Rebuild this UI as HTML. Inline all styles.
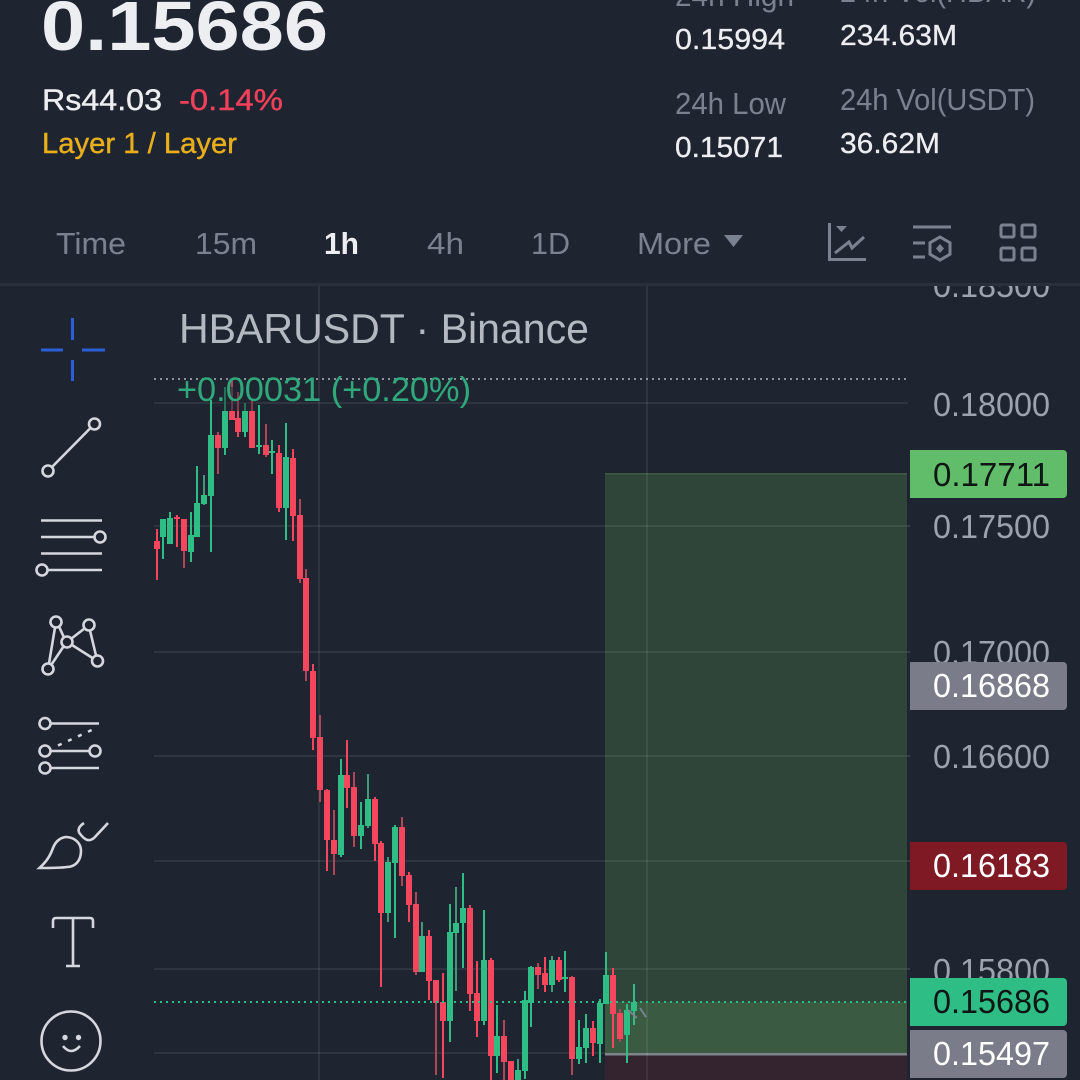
<!DOCTYPE html>
<html><head><meta charset="utf-8"><title>HBARUSDT</title>
<style>
html,body{margin:0;padding:0;width:1080px;height:1080px;overflow:hidden;background:#1f2530}
svg{display:block}
text{font-family:"Liberation Sans",sans-serif}
.a{fill:#9da3ad;font-size:33px}
.l{font-size:33px}
.m{fill:#7b828f;font-size:31px}
.w{fill:#eceef1;font-size:29px;stroke:#eceef1;stroke-width:.3}
.i{fill:none;stroke:#d5d7de;stroke-width:2.6}
.t{fill:none;stroke:#7b828f;stroke-width:3}
</style></head><body>
<svg width="1080" height="1080" viewBox="0 0 1080 1080" xmlns="http://www.w3.org/2000/svg">
<rect width="1080" height="1080" fill="#1f2530"/>

<!-- header -->
<text x="41" y="50" font-size="70" font-weight="700" fill="#eceef2" textLength="287" lengthAdjust="spacingAndGlyphs">0.15686</text>
<text x="42" y="110" font-size="30" fill="#eceef1" stroke="#eceef1" stroke-width=".4" textLength="120" lengthAdjust="spacingAndGlyphs">Rs44.03</text>
<text x="179" y="110" font-size="30" fill="#f0405a" stroke="#f0405a" stroke-width=".4" textLength="104" lengthAdjust="spacingAndGlyphs">-0.14%</text>
<text x="42" y="153" font-size="29" fill="#e8ae1c" stroke="#e8ae1c" stroke-width=".4" textLength="195" lengthAdjust="spacingAndGlyphs">Layer 1 / Layer</text>
<text x="675" y="6" class="m" font-size="30" textLength="119" lengthAdjust="spacingAndGlyphs">24h High</text>
<text x="840" y="2" class="m" textLength="196" lengthAdjust="spacingAndGlyphs">24h Vol(HBAR)</text>
<text x="675" y="49" class="w" textLength="110" lengthAdjust="spacingAndGlyphs">0.15994</text>
<text x="840" y="45" class="w" textLength="117" lengthAdjust="spacingAndGlyphs">234.63M</text>
<text x="675" y="114" class="m" textLength="111" lengthAdjust="spacingAndGlyphs">24h Low</text>
<text x="840" y="110" class="m" textLength="195" lengthAdjust="spacingAndGlyphs">24h Vol(USDT)</text>
<text x="675" y="157" class="w" textLength="108" lengthAdjust="spacingAndGlyphs">0.15071</text>
<text x="840" y="153" class="w" textLength="100" lengthAdjust="spacingAndGlyphs">36.62M</text>

<!-- tabs -->
<text x="56" y="254" class="m" textLength="70" lengthAdjust="spacingAndGlyphs">Time</text>
<text x="195" y="254" class="m" textLength="62" lengthAdjust="spacingAndGlyphs">15m</text>
<text x="324" y="254" font-size="31" font-weight="700" fill="#eceef1" textLength="35" lengthAdjust="spacingAndGlyphs">1h</text>
<text x="427" y="254" class="m" textLength="37" lengthAdjust="spacingAndGlyphs">4h</text>
<text x="531" y="254" class="m" textLength="39" lengthAdjust="spacingAndGlyphs">1D</text>
<text x="637" y="254" class="m" textLength="74" lengthAdjust="spacingAndGlyphs">More</text>
<path d="M724 235H743L733.500 247Z" fill="#7b828f"/>
<path class="t" d="M829.500 223V259.500H866"/>
<path d="M836 226H847L841.500 232Z" fill="#7b828f"/>
<path class="t" d="M835 253L849 242L852 248L864 237"/>
<path class="t" d="M913 227H951M913 243H925M913 257H925"/>
<path class="t" d="M940 237L950 242.700V254.300L940 260L930 254.300V242.700Z"/>
<path d="M940 244L944 248.500L940 253L936 248.500Z" fill="#7b828f"/>
<rect x="1001" y="225" width="13" height="12" rx="1.500" class="t"/>
<rect x="1022" y="225" width="13" height="12" rx="1.500" class="t"/>
<rect x="1001" y="248" width="13" height="12" rx="1.500" class="t"/>
<rect x="1022" y="248" width="13" height="12" rx="1.500" class="t"/>
<rect x="0" y="283" width="1080" height="3" fill="#2a303a"/>

<!-- zones -->
<rect x="605" y="473" width="302" height="529" fill="#2f4539"/>
<rect x="605" y="473" width="302" height="1.500" fill="#3d5a47"/>
<rect x="605" y="1002" width="302" height="51" fill="#3a5a41"/>
<rect x="605" y="1055" width="302" height="25" fill="#33242f"/>
<rect x="605" y="1053" width="302" height="2.500" fill="#7f8489"/>

<!-- grid -->
<path d="M154 403H910M154 526H910M154 652H910M154 756H910M154 861H910M154 969H910M154 1053H605" stroke="#ffffff" stroke-opacity=".075" stroke-width="2" fill="none"/>
<path d="M319 286V1080M647 286V1080" stroke="#ffffff" stroke-opacity=".075" stroke-width="2" fill="none"/>
<line x1="154" y1="379" x2="908" y2="379" stroke="#8d939c" stroke-width="2" stroke-dasharray="2 4"/>

<!-- wicks -->
<path fill="none" stroke="#f6465d" stroke-width="2" d="M157 529V580M177 515V547M238 392V437M252 400V420M279 445V512M293 449V541M313 664V750M327 789V871M347 740V808M375 797V861M381 841V987M409 872V922M429 930V1000M443 973V1078M470 905V1011M477 961V1037M491 958V1080M545 957V992M559 957V982M593 1021V1056M613 968V1048"/>
<path fill="none" stroke="#b2455a" stroke-width="2" d="M184 519V568M218 432V474M232 380V420M266 424V457M300 499V583M306 569V681M320 715V802M334 810V875M354 772V847M402 817V886M416 892V975M436 980V1075M504 1020V1080M538 963V989M572 976V1075M620 1009V1042"/>
<path fill="none" stroke="#2ebd85" stroke-width="2" d="M163 525V559M170 512V544M191 512V562M197 466V537M211 400V552M225 387V455M245 403V437M259 405V454M272 440V474M286 423V540M341 759V857M361 802V849M395 825V938M450 904V1042M463 873V968M484 910V1025M497 1005V1073M525 991V1079M531 966V1027M565 951V992M579 1020V1064M586 1014V1063M600 999V1063M606 952V1004M627 1004V1063M634 984V1025"/>
<path fill="none" stroke="#3f9a7b" stroke-width="2" d="M204 475V505M368 774V828M388 857V922M422 922V972M456 887V991M518 1059V1080M552 956V992"/>

<!-- bodies -->
<path fill="none" stroke="#f6465d" stroke-width="6" d="M157 541V549M177 517V519M184 519V551M218 435V448M232 411V420M238 418V432M252 411V448M266 445V455M279 453V508M293 458V516M300 515V579M306 578V671M313 671V738M320 737V790M327 790V840M334 840V854M347 775V788M354 787V836M375 799V844M381 843V913M402 827V876M409 875V905M416 904V972M429 936V981M436 980V1003M443 1002V1021M470 908V994M477 993V1021M491 960V1056M504 1036V1062M511 1061V1080M538 967V975M545 973V985M559 960V980M572 977V1059M593 1028V1043M613 975V1014M620 1013V1039"/>
<path fill="none" stroke="#2ebd85" stroke-width="6" d="M163 519V537M170 518V544M191 535V552M197 503V537M204 495V504M211 435V496M225 411V448M245 411V432M259 445V447M272 451V453M286 457V508M341 775V855M361 825V836M368 799V826M388 862V913M395 827V863M422 936V972M450 932V1021M456 923V933M463 908V923M484 960V1021M497 1036V1056M518 1070V1080M525 1000V1071M531 967V1003M552 960V985M565 977V979M579 1047V1059M586 1028V1048M600 1003V1044M606 975V1004M627 1010V1035M634 1002V1011"/>

<!-- dim overlay on top candles -->
<rect x="222" y="387" width="34" height="24" fill="#1f2530" fill-opacity=".5"/>
<path d="M628 1010L637 1018M640 1008L646 1017" stroke="#7b828f" stroke-width="2" fill="none"/>

<!-- current price line -->
<line x1="154" y1="1002" x2="910" y2="1002" stroke="#2ebd85" stroke-width="2" stroke-dasharray="2 4"/>

<!-- legend -->
<text x="179" y="343" font-size="42" fill="#b4b9c1" textLength="410" lengthAdjust="spacingAndGlyphs">HBARUSDT · Binance</text>
<text x="177" y="401" font-size="34" fill="#2fa97c" textLength="294" lengthAdjust="spacingAndGlyphs">+0.00031 (+0.20%)</text>

<!-- axis -->
<rect x="908" y="286" width="172" height="794" fill="#1f2530"/>
<path d="M908 526H910M908 652H910M908 756H910M908 861H910M908 969H910" stroke="#3a4048" stroke-width="2"/>
<svg x="900" y="286" width="180" height="794" viewBox="900 286 180 794" overflow="hidden">
<text x="933" y="297" class="a" textLength="117" lengthAdjust="spacingAndGlyphs">0.18500</text>
</svg>
<text x="933" y="416" class="a" textLength="117" lengthAdjust="spacingAndGlyphs">0.18000</text>
<text x="933" y="538" class="a" textLength="117" lengthAdjust="spacingAndGlyphs">0.17500</text>
<text x="933" y="664" class="a" textLength="117" lengthAdjust="spacingAndGlyphs">0.17000</text>
<text x="933" y="768" class="a" textLength="117" lengthAdjust="spacingAndGlyphs">0.16600</text>
<text x="933" y="982" class="a" textLength="117" lengthAdjust="spacingAndGlyphs">0.15800</text>

<path d="M910 450H1063a4 4 0 0 1 4 4V494a4 4 0 0 1 -4 4H910Z" fill="#62bd6b"/>
<text x="933" y="486" class="l" fill="#0f1512" textLength="117" lengthAdjust="spacingAndGlyphs">0.17711</text>
<path d="M910 662H1063a4 4 0 0 1 4 4V706a4 4 0 0 1 -4 4H910Z" fill="#7a7d89"/>
<text x="933" y="697" class="l" fill="#ffffff" textLength="117" lengthAdjust="spacingAndGlyphs">0.16868</text>
<path d="M910 842H1063a4 4 0 0 1 4 4V886a4 4 0 0 1 -4 4H910Z" fill="#7f1a24"/>
<text x="933" y="877" class="l" fill="#ffffff" textLength="117" lengthAdjust="spacingAndGlyphs">0.16183</text>
<path d="M910 978H1063a4 4 0 0 1 4 4V1022a4 4 0 0 1 -4 4H910Z" fill="#2ebd85"/>
<text x="933" y="1013" class="l" fill="#0f1512" textLength="117" lengthAdjust="spacingAndGlyphs">0.15686</text>
<path d="M910 1030H1063a4 4 0 0 1 4 4V1074a4 4 0 0 1 -4 4H910Z" fill="#7a7d89"/>
<text x="933" y="1065" class="l" fill="#ffffff" textLength="117" lengthAdjust="spacingAndGlyphs">0.15497</text>

<!-- left tools -->
<path d="M72.500 318V340M72.500 360V381M41 350H63M82 350H105" stroke="#2a5fd8" stroke-width="3" fill="none"/>
<g class="i">
<circle cx="94.500" cy="424" r="5.500"/><circle cx="48" cy="471" r="5.500"/><path d="M52 467L90.500 428"/>
<path d="M41 520.500H102M41 537H94.500M41 553.500H102M48 570H102"/>
<circle cx="100" cy="537" r="5.500"/><circle cx="42" cy="570" r="5.500"/>
<circle cx="56" cy="622" r="5.500"/><circle cx="89" cy="625" r="5.500"/><circle cx="67" cy="642" r="5.500"/><circle cx="97.500" cy="661" r="5.500"/><circle cx="48" cy="669" r="5.500"/>
<path d="M55 627.500L49 663.500M59 626.500L64 637.500M84.500 628.500L71.500 638.500M90 630.500L96 655.500M72 645L92.500 658M63.500 646.500L51.500 664.500"/>
<circle cx="45" cy="723.500" r="5.500"/><path d="M50.500 723.500H99"/>
<circle cx="45" cy="751" r="5.500"/><circle cx="95" cy="751" r="5.500"/><path d="M50.500 751H89.500"/>
<circle cx="45" cy="768" r="5.500"/><path d="M50.500 768H99"/>
<path d="M58 745.500L94 729" stroke-dasharray="4 7"/>
<path d="M39.500 868C47 861 50 856 53 848C56 840 62 837 67 837C76 838 81 844 81 851C81 861 75 867 67 867C60 868 50 868 39.500 868Z"/>
<path d="M84 823C78 827 77 831 81 835C85 840 89 842 94 838L108 823"/>
<path d="M53 928V921Q53 918 56 918H90Q93 918 93 921V928M73 918V966M66 966H80"/>
<circle cx="71" cy="1041" r="29.500"/>
<path d="M63 1046Q71 1056 80 1046"/>
</g>
<circle cx="65" cy="1037.500" r="2.700" fill="#d5d7de"/><circle cx="78.500" cy="1037.500" r="2.700" fill="#d5d7de"/>
</svg>
</body></html>
